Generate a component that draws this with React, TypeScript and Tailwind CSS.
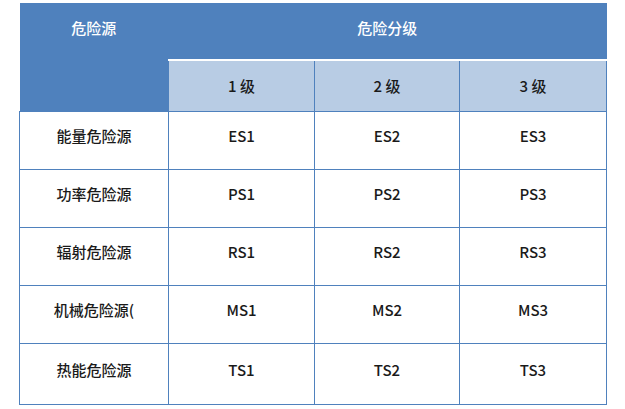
import React from "react";

const rows = [
  ["能量危险源", "ES1", "ES2", "ES3"],
  ["功率危险源", "PS1", "PS2", "PS3"],
  ["辐射危险源", "RS1", "RS2", "RS3"],
  ["机械危险源(", "MS1", "MS2", "MS3"],
  ["热能危险源", "TS1", "TS2", "TS3"],
];

export default function App() {
  return (
    <div
      className="w-[625px] h-[409px] bg-white pl-[19px] pt-[3px]"
      style={{ fontFamily: '"Noto Sans CJK SC", "Noto Sans", sans-serif' }}
    >
      <table className="w-[587px] table-fixed border-collapse text-[15px] font-medium text-[#1a1a1a]">
        <colgroup>
          <col className="w-[149px]" />
          <col className="w-[146px]" />
          <col className="w-[145px]" />
          <col className="w-[147px]" />
        </colgroup>
        <thead>
          <tr className="h-[57px]">
            <th
              rowSpan={2}
              className="bg-[#4f81bd] text-white font-medium align-top pt-[14px] border-b border-[#4f81bd]"
            >
              危险源
            </th>
            <th
              colSpan={3}
              className="bg-[#4f81bd] text-white font-medium align-middle pb-[5px] border-r border-[#4f81bd]"
            >
              危险分级
            </th>
          </tr>
          <tr className="h-[51px]">
            {["1 级", "2 级", "3 级"].map((t) => (
              <th
                key={t}
                className="bg-[#b8cce4] font-medium border-t-2 border-t-white border-x border-x-[#4f81bd] border-b border-b-[#4f81bd]"
              >
                {t}
              </th>
            ))}
          </tr>
        </thead>
        <tbody>
          {rows.map((r, i) => (
            <tr key={i} className={i === 4 ? "h-[61px]" : "h-[58px]"}>
              {r.map((c, j) => (
                <td
                  key={j}
                  className="border border-[#4f81bd] text-center align-middle pb-[7px]"
                >
                  {c}
                </td>
              ))}
            </tr>
          ))}
        </tbody>
      </table>
    </div>
  );
}
